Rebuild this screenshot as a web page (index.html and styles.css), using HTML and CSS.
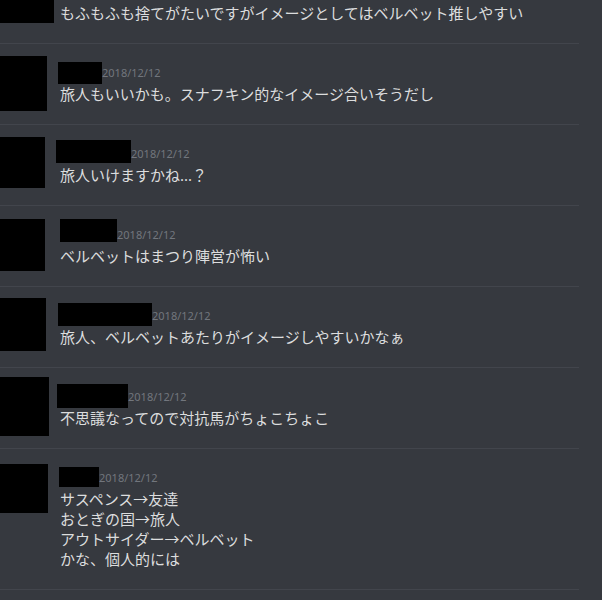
FILE: index.html
```html
<!DOCTYPE html>
<html lang="ja">
<head>
<meta charset="utf-8">
<title>chat</title>
<link rel="stylesheet" href="styles.css">
</head>
<body>
<div class="chat">
  <div class="msg m1">
    <div class="pic"><div class="avatar"></div></div>
    <div class="body">
      <div class="header"><span class="name"></span><span class="date">2018/12/12</span></div>
      <div class="text">もふもふも捨てがたいですがイメージとしてはベルベット推しやすい</div>
    </div>
  </div>
  <div class="msg m2">
    <div class="pic"><div class="avatar"></div></div>
    <div class="body">
      <div class="header"><span class="name"></span><span class="date">2018/12/12</span></div>
      <div class="text">旅人もいいかも。スナフキン的なイメージ合いそうだし</div>
    </div>
  </div>
  <div class="msg m3">
    <div class="pic"><div class="avatar"></div></div>
    <div class="body">
      <div class="header"><span class="name"></span><span class="date">2018/12/12</span></div>
      <div class="text">旅人いけますかね<span class="latin">...</span>？</div>
    </div>
  </div>
  <div class="msg m4">
    <div class="pic"><div class="avatar"></div></div>
    <div class="body">
      <div class="header"><span class="name"></span><span class="date">2018/12/12</span></div>
      <div class="text">ベルベットはまつり陣営が怖い</div>
    </div>
  </div>
  <div class="msg m5">
    <div class="pic"><div class="avatar"></div></div>
    <div class="body">
      <div class="header"><span class="name"></span><span class="date">2018/12/12</span></div>
      <div class="text">旅人、ベルベットあたりがイメージしやすいかなぁ</div>
    </div>
  </div>
  <div class="msg m6">
    <div class="pic"><div class="avatar"></div></div>
    <div class="body">
      <div class="header"><span class="name"></span><span class="date">2018/12/12</span></div>
      <div class="text">不思議なってので対抗馬がちょこちょこ</div>
    </div>
  </div>
  <div class="msg m7">
    <div class="pic"><div class="avatar"></div></div>
    <div class="body">
      <div class="header"><span class="name"></span><span class="date">2018/12/12</span></div>
      <div class="text">サスペンス→友達<br>おとぎの国→旅人<br>アウトサイダー→ベルベット<br>かな、個人的には</div>
    </div>
  </div>
</div>
</body>
</html>
```
FILE: styles.css
```css
html, body {
  margin: 0;
  padding: 0;
  background: #36393f;
  height: 100%;
  overflow: hidden;
}

body {
  font-family: "Noto Sans CJK JP", "Noto Sans", sans-serif;
  color: #dcddde;
}

.chat {
  width: 579px;
  margin-top: -37px;
}

.msg {
  display: flex;
  align-items: flex-start;
  padding: 18px 0 20px;
  border-bottom: 1px solid #42454c;
}

.pic {
  flex: none;
  width: 60px;
  height: 0;
}

.avatar {
  background: #000;
  width: 46px;
  height: 53px;
}

.body {
  display: flex;
  flex-direction: column;
}

.header {
  display: flex;
  align-items: flex-start;
  height: 22px;
}

.name {
  display: block;
  background: #000;
  width: 50px;
  height: 22px;
}

.date {
  font-family: "Noto Sans", sans-serif;
  font-size: 11px;
  line-height: 22px;
  color: #72767d;
}

.text {
  font-size: 15px;
  line-height: 20px;
}

.latin {
  font-family: "Noto Sans", sans-serif;
}

/* per-message redaction boxes */
.m1 .avatar { width: 54px; height: 55px; margin-top: -13px; }
.m1 .name { height: 16px; }

.m2 .avatar { width: 47px; height: 55px; margin-top: -6px; }
.m2 .name { width: 44px; height: 22px; margin: 0 0 0 -2px; }

.m3 .avatar { width: 45px; height: 51px; margin-top: -6px; }
.m3 .name { width: 75px; height: 23px; margin: -3px 0 0 -4px; }

.m4 .avatar { width: 45px; height: 52px; margin-top: -5px; }
.m4 .name { width: 57px; height: 23px; margin: -5px 0 0 0; }

.m5 .avatar { width: 46px; height: 53px; margin-top: -7px; }
.m5 .name { width: 94px; height: 23px; margin: -2px 0 0 -2px; }

.m6 .avatar { width: 49px; height: 59px; margin-top: -9px; }
.m6 .name { width: 71px; height: 24px; margin: -2px 0 0 -3px; }

.m7 .avatar { width: 48px; height: 49px; margin-top: -3px; }
.m7 .name { width: 40px; height: 20px; margin: 0 0 0 -1px; }
```
